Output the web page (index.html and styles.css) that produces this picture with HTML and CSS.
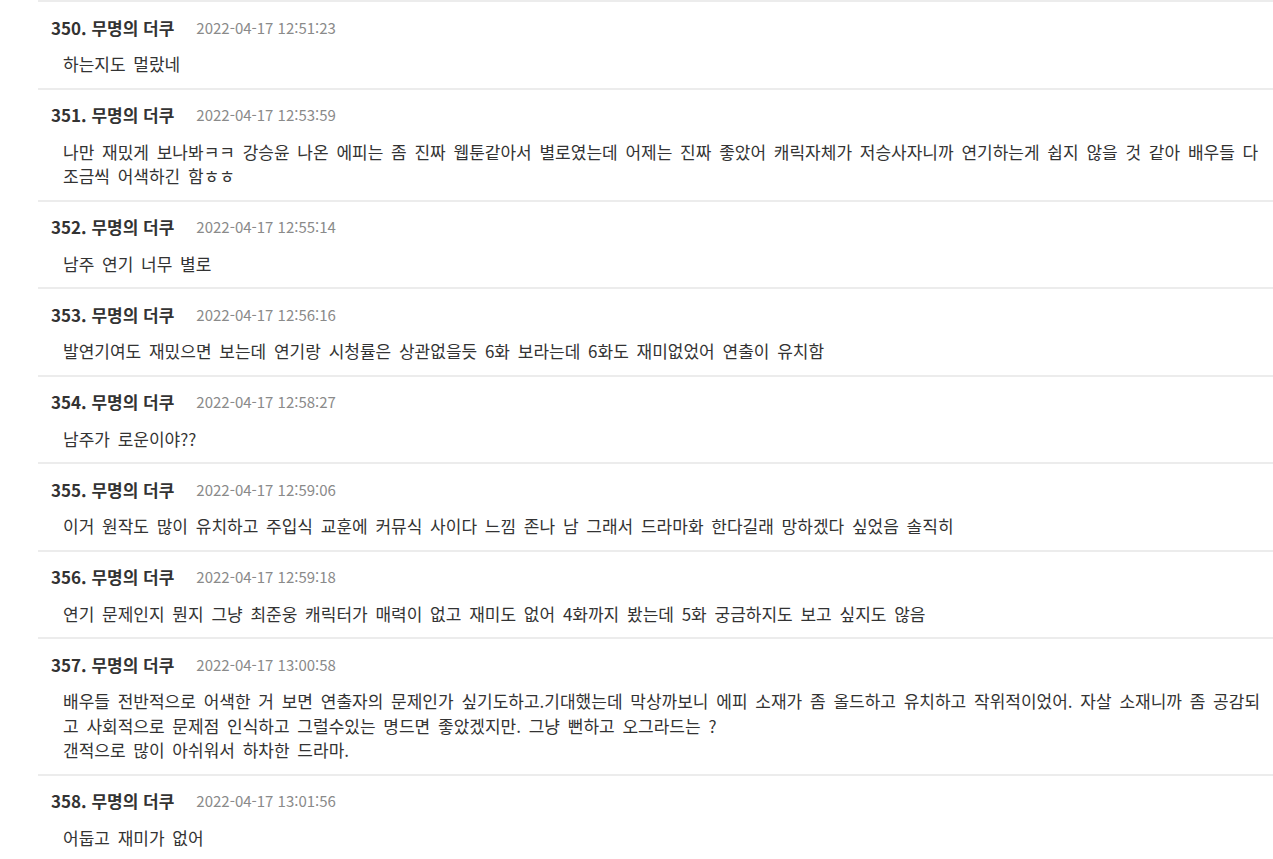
FILE: index.html
```html
<!DOCTYPE html>
<html lang="ko">
<head>
<meta charset="utf-8">
<title>댓글</title>
<link rel="stylesheet" href="styles.css">
</head>
<body>
<ul class="comments">
  <li class="comment">
    <div class="meta"><span class="author">350. 무명의 더쿠</span><span class="date">2022-04-17 12:51:23</span></div>
    <div class="body">하는지도 멀랐네</div>
  </li>
  <li class="comment">
    <div class="meta"><span class="author">351. 무명의 더쿠</span><span class="date">2022-04-17 12:53:59</span></div>
    <div class="body">나만 재밌게 보나봐ㅋㅋ 강승윤 나온 에피는 좀 진짜 웹툰같아서 별로였는데 어제는 진짜 좋았어 캐릭자체가 저승사자니까 연기하는게 쉽지 않을 것 같아 배우들 다 조금씩 어색하긴 함ㅎㅎ</div>
  </li>
  <li class="comment">
    <div class="meta"><span class="author">352. 무명의 더쿠</span><span class="date">2022-04-17 12:55:14</span></div>
    <div class="body">남주 연기 너무 별로</div>
  </li>
  <li class="comment">
    <div class="meta"><span class="author">353. 무명의 더쿠</span><span class="date">2022-04-17 12:56:16</span></div>
    <div class="body">발연기여도 재밌으면 보는데 연기랑 시청률은 상관없을듯 6화 보라는데 6화도 재미없었어 연출이 유치함</div>
  </li>
  <li class="comment">
    <div class="meta"><span class="author">354. 무명의 더쿠</span><span class="date">2022-04-17 12:58:27</span></div>
    <div class="body">남주가 로운이야??</div>
  </li>
  <li class="comment">
    <div class="meta"><span class="author">355. 무명의 더쿠</span><span class="date">2022-04-17 12:59:06</span></div>
    <div class="body">이거 원작도 많이 유치하고 주입식 교훈에 커뮤식 사이다 느낌 존나 남 그래서 드라마화 한다길래 망하겠다 싶었음 솔직히</div>
  </li>
  <li class="comment">
    <div class="meta"><span class="author">356. 무명의 더쿠</span><span class="date">2022-04-17 12:59:18</span></div>
    <div class="body">연기 문제인지 뭔지 그냥 최준웅 캐릭터가 매력이 없고 재미도 없어 4화까지 봤는데 5화 궁금하지도 보고 싶지도 않음</div>
  </li>
  <li class="comment">
    <div class="meta"><span class="author">357. 무명의 더쿠</span><span class="date">2022-04-17 13:00:58</span></div>
    <div class="body">배우들 전반적으로 어색한 거 보면 연출자의 문제인가 싶기도하고.기대했는데 막상까보니 에피 소재가 좀 올드하고 유치하고 작위적이었어. 자살 소재니까 좀 공감되고 사회적으로 문제점 인식하고 그럴수있는 명드면 좋았겠지만. 그냥 뻔하고 오그라드는 ?<br>갠적으로 많이 아쉬워서 하차한 드라마.</div>
  </li>
  <li class="comment">
    <div class="meta"><span class="author">358. 무명의 더쿠</span><span class="date">2022-04-17 13:01:56</span></div>
    <div class="body">어둡고 재미가 없어</div>
  </li>
</ul>
</body>
</html>
```

FILE: styles.css
```css
html, body {
  margin: 0;
  padding: 0;
  background: #ffffff;
}

body {
  font-family: "Noto Sans CJK KR", "Noto Sans", sans-serif;
  color: #333333;
  overflow: hidden;
}

.comments {
  list-style: none;
  margin: 0 0 0 38px;
  padding: 0;
  border-top: 2px solid #ececec;
}

.comment {
  padding: 13px 0 11px;
  border-bottom: 2px solid #ececec;
}

.meta {
  display: flex;
  align-items: center;
  height: 24px;
  padding-left: 13px;
}

.author {
  font-size: 17px;
  font-weight: 700;
  color: #333333;
}

.date {
  margin-left: 22px;
  font-size: 15px;
  color: #8a8a8a;
}

.body {
  margin-top: 13px;
  padding: 0 12px 0 25px;
  font-size: 17px;
  line-height: 24.5px;
  word-spacing: 3px;
  word-break: break-all;
  color: #333333;
}
```
